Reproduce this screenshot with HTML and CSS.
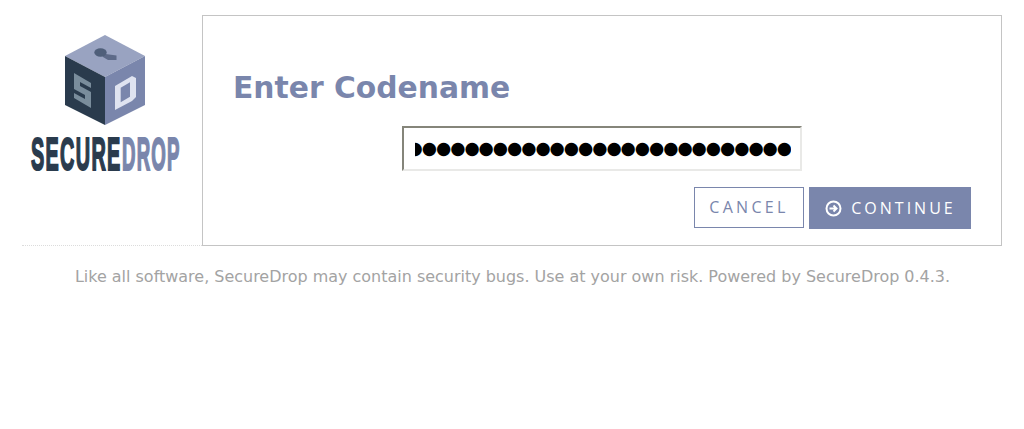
FILE: index.html
```html
<!DOCTYPE html>
<html lang="en">
<head>
<meta charset="utf-8">
<title>SecureDrop</title>
<link rel="stylesheet" href="styles.css">
</head>
<body>
<div class="container">
  <div class="main">
    <aside class="sidebar">
      <svg class="logo" width="152" height="140" viewBox="0 0 152 140">
        <polygon points="75,0 115,21 75,42 35,21" fill="#99a3c1"/>
        <polygon points="35,21 75,42 75,90 35,70" fill="#2a3b4d"/>
        <polygon points="75,42 115,21 115,70 75,90" fill="#7a86ac"/>
        <polygon points="72,18.5 86.5,20.5 86.5,25 78,25 73,22" fill="#5d6a88"/>
        <ellipse cx="70.5" cy="17.5" rx="6.2" ry="4.2" fill="#4f5f7a"/>
        <polygon points="44,38 61,48 61,73 44,63" fill="#7a8d9c"/>
        <polygon points="50,47 61,53 61,57 50,51" fill="#2a3b4d"/>
        <polygon points="44,54 55,60 55,64 44,58" fill="#2a3b4d"/>
        <polygon points="85,51 102,41 106,43 106,62 102,66 85,75" fill="#dfe3f0"/>
        <polygon points="90.7,52.7 100,47.3 100,61.7 90.7,67.3" fill="#7a86ac"/>
        <text class="word word-dark" transform="matrix(.432 0 0 1 1 134.5)">SECURE</text>
        <text class="word word-light" transform="matrix(.405 0 0 1 92 134.5)">DROP</text>
      </svg>
    </aside>
    <section class="panel">
      <h1 class="title">Enter Codename</h1>
      <form class="form">
        <div class="codename"><div class="codename-clip"><span class="dots">●●●●●●●●●●●●●●●●●●●●●●●●●●●●●●●●●●●●</span></div></div>
        <div class="actions">
          <a class="btn btn-cancel">CANCEL</a>
          <button class="btn btn-continue" type="button">
            <svg class="btn-icon" width="17" height="17" viewBox="0 0 17 17">
              <circle cx="8.5" cy="8.5" r="7" fill="none" stroke="#fff" stroke-width="2"/>
              <path d="M4.5 8.5H11M8.5 5.5l3 3-3 3" fill="none" stroke="#fff" stroke-width="2"/>
            </svg>
            <span>CONTINUE</span>
          </button>
        </div>
      </form>
    </section>
  </div>
  <p class="footer">Like all software, SecureDrop may contain security bugs. Use at your own risk. Powered by SecureDrop 0.4.3.</p>
</div>
</body>
</html>
```
FILE: styles.css
```css
html, body {
  margin: 0;
  padding: 0;
  background: #fff;
}
body {
  font-family: "DejaVu Sans", sans-serif;
}
.container {
  width: 980px;
  margin: 0 22px;
  padding-top: 15px;
}
.main {
  display: flex;
  border-bottom: 1px dotted #dcdcdc;
}
.sidebar {
  width: 180px;
  flex: none;
  box-sizing: border-box;
  padding: 20px 0 0 8px;
}
.logo {
  display: block;
  overflow: visible;
}
.word {
  font: bold 46px "Liberation Sans", sans-serif;
  letter-spacing: 3px;
  stroke-width: 2px;
}
.word-dark { fill: #2a3b4d; stroke: #2a3b4d; }
.word-light { fill: #7a86ac; stroke: #7a86ac; }
.panel {
  flex: 1;
  box-sizing: border-box;
  height: 231px;
  margin-bottom: -1px;
  border: 1px solid #c4c4c4;
  padding: 0 30px;
}
.title {
  margin: 54px 0 20px;
  font-size: 29.78px;
  line-height: 36px;
  font-weight: bold;
  color: #7a86ac;
}
.form {
  display: flex;
  flex-direction: column;
  align-items: stretch;
}
.codename {
  align-self: flex-start;
  margin-left: 169px;
  width: 400px;
  height: 45px;
  box-sizing: border-box;
  border: 2px solid;
  border-color: #85857a #e9e9e7 #e9e9e7 #85857a;
  padding: 0 9px 0 11px;
}
.codename-clip {
  height: 100%;
  display: flex;
  justify-content: flex-end;
  align-items: center;
  overflow: hidden;
}
.dots {
  font-size: 17.5px;
  letter-spacing: -1.07px;
  line-height: 41px;
  white-space: nowrap;
  color: #000;
  flex: none;
}
.actions {
  display: flex;
  justify-content: flex-end;
  align-items: flex-start;
  gap: 5px;
  margin-top: 16px;
}
.btn {
  font-family: "Open Sans", sans-serif;
  font-size: 16px;
  box-sizing: border-box;
  display: flex;
  align-items: center;
  justify-content: center;
}
.btn-cancel {
  width: 110px;
  height: 41px;
  padding: 0 0 1px;
  border: 1px solid #7a86ac;
  letter-spacing: 3.3px;
  color: #7a86ac;
}
.btn-continue {
  width: 162px;
  height: 42px;
  border: 0;
  padding: 0 0 1px 1px;
  background: #7a86ac;
  letter-spacing: 3px;
  color: #fff;
  gap: 9px;
}
.btn-icon {
  position: relative;
  top: 1px;
}
.footer {
  margin: 21px 0 0;
  padding-left: 1px;
  text-align: center;
  font-size: 15.98px;
  line-height: 20px;
  color: #a3a3a3;
}
```
